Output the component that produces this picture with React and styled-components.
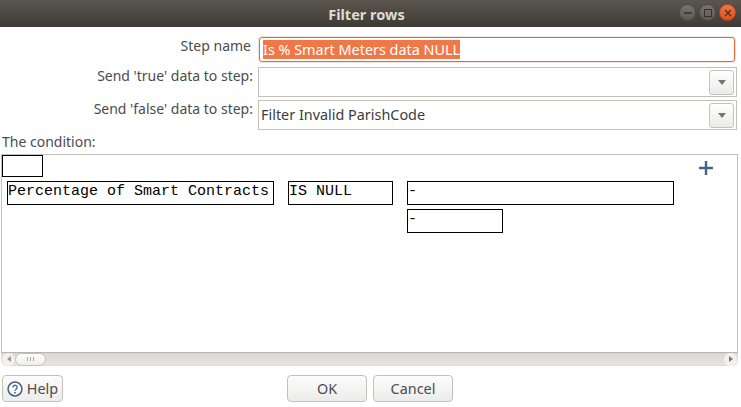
import React from 'react';
import styled, { createGlobalStyle } from 'styled-components';

const Global = createGlobalStyle`
  html, body {
    margin: 0;
    padding: 0;
    background: #fff;
  }
  * {
    box-sizing: border-box;
  }
`;

const Window = styled.div`
  width: 741px;
  height: 407px;
  overflow: hidden;
  background: #fff;
  font-family: "Noto Sans", sans-serif;
  font-size: 14px;
  color: #3c3c3c;
`;

const TitleBar = styled.div`
  position: relative;
  height: 27px;
  padding-right: 8px;
  background: linear-gradient(#5a564d, #3d3b36);
  display: flex;
  align-items: center;
  justify-content: center;
  color: #dfdbd2;
  font-weight: 700;
  font-size: 14.5px;
`;

const WindowButtons = styled.div`
  position: absolute;
  right: 5px;
  top: 4px;
  display: flex;
  gap: 3px;
`;

const WindowButton = styled.div`
  width: 17px;
  height: 17px;
  border-radius: 50%;
  display: flex;
  align-items: center;
  justify-content: center;
  background: ${p => (p.$close ? 'linear-gradient(#f0774a, #d9501e)' : 'linear-gradient(#77746c, #5d5a53)')};
  border: 1px solid ${p => (p.$close ? '#b5461f' : '#4c4a44')};
`;

const Form = styled.div`
  display: grid;
  grid-template-columns: 258px 479px;
  padding-top: 10px;
`;

const Label = styled.div`
  text-align: right;
  padding-right: ${p => p.$pad || 5}px;
  line-height: 17px;
  color: #4c4c4c;
`;

const NameInput = styled.div`
  height: 25px;
  margin: 0 2px 5px 1px;
  border: 1px solid #e9663a;
  border-radius: 3px;
  box-shadow: 0 0 0 1px #f3e4dc;
  padding: 2px 3px;
  line-height: 19px;
  font-size: 14.4px;
`;

const Selected = styled.span`
  display: inline-block;
  height: 19px;
  background: #f07746;
  color: #fff;
`;

const Combo = styled.div`
  height: 30px;
  margin-bottom: ${p => p.$gap || 0}px;
  border: 1px solid #c4c1ba;
  display: flex;
  align-items: center;
  justify-content: space-between;
  padding: 0 2px 0 2px;
  font-size: 14.4px;
  line-height: 17px;
  color: #3c3c3c;
`;

const ComboText = styled.span`
  margin-bottom: 2px;
`;

const ComboArrow = styled.div`
  width: 25px;
  height: 25px;
  border: 1px solid #c6c3bc;
  border-radius: 3px;
  background: linear-gradient(#fff, #ebebea);
  display: flex;
  align-items: center;
  justify-content: center;
  &::after {
    content: '';
    border-left: 4px solid transparent;
    border-right: 4px solid transparent;
    border-top: 5px solid #77756f;
  }
`;

const Heading = styled.div`
  padding: 2px 0 0 2px;
  height: 24px;
  line-height: 19px;
  color: #4c4c4c;
`;

const Canvas = styled.div`
  position: relative;
  width: 737px;
  height: 199px;
  margin-left: 1px;
  border: 1px solid #c4c1ba;
  border-bottom-color: #b8b5ad;
  background: #fff;
`;

const Node = styled.div`
  position: absolute;
  left: ${p => p.$x}px;
  top: ${p => p.$y}px;
  width: ${p => p.$w}px;
  height: ${p => p.$h}px;
  border: 1px solid #000;
  background: #fff;
  color: #000;
  font-family: "Liberation Mono", monospace;
  font-size: 15px;
  line-height: 19px;
  white-space: pre;
`;

const AddButton = styled.svg`
  position: absolute;
  left: 696px;
  top: 5px;
`;

const Scrollbar = styled.div`
  width: 737px;
  height: 13px;
  margin-left: 1px;
  display: flex;
  align-items: center;
  background: linear-gradient(#d8d7d4, #e6e5e3);
  border: 1px solid #dcdbd8;
  border-top: none;
  border-radius: 0 0 6px 6px;
`;

const ScrollEnd = styled.div`
  width: 13px;
  height: 13px;
  flex: none;
  background: #f2f1ef;
  border-radius: 6px;
  display: flex;
  align-items: center;
  justify-content: center;
  &::after {
    content: '';
    border-top: 3px solid transparent;
    border-bottom: 3px solid transparent;
    ${p => (p.$right ? 'border-left: 4px solid #77756f;' : 'border-right: 4px solid #9a9892;')}
  }
`;

const Thumb = styled.div`
  width: 31px;
  height: 13px;
  flex: none;
  border: 1px solid #c4c2bd;
  border-radius: 7px;
  background: linear-gradient(#fff, #eeedeb);
  display: flex;
  align-items: center;
  justify-content: center;
  gap: 2px;
`;

const Grip = styled.span`
  width: 1px;
  height: 4px;
  background: #aaa8a2;
`;

const Track = styled.div`
  flex: 1;
`;

const Footer = styled.div`
  display: grid;
  grid-template-columns: 279px auto auto 1fr;
  column-gap: 6px;
  padding: 9px 0 0 2px;
`;

const Button = styled.div`
  height: 27px;
  width: ${p => p.$w}px;
  border: 1px solid #c4c1ba;
  border-radius: 4px;
  background: linear-gradient(#fcfcfc, #ececeb);
  display: flex;
  align-items: center;
  justify-content: center;
  gap: 4px;
  font-size: 14.4px;
  color: #4c4c4c;
`;

const App = () => (
  <Window>
    <Global />
    <TitleBar>
      Filter rows
      <WindowButtons>
        <WindowButton>
          <svg width="10" height="10"><path d="M1 5h8" stroke="#35332f" strokeWidth="1.5" /></svg>
        </WindowButton>
        <WindowButton>
          <svg width="10" height="10"><rect x="1.5" y="1.5" width="7" height="7" fill="none" stroke="#35332f" /></svg>
        </WindowButton>
        <WindowButton $close>
          <svg width="10" height="10"><path d="M2 2l6 6M8 2l-6 6" stroke="#5a2a12" strokeWidth="1.3" /></svg>
        </WindowButton>
      </WindowButtons>
    </TitleBar>
    <Form>
      <Label $pad={7}>Step name</Label>
      <NameInput><Selected>Is % Smart Meters data NULL</Selected></NameInput>
      <Label>Send 'true' data to step:</Label>
      <Combo $gap={3}><span /><ComboArrow /></Combo>
      <Label>Send 'false' data to step:</Label>
      <Combo><ComboText>Filter Invalid ParishCode</ComboText><ComboArrow /></Combo>
    </Form>
    <Heading>The condition:</Heading>
    <Canvas>
      <Node $x={0} $y={0} $w={41} $h={22} />
      <Node $x={5} $y={26} $w={267} $h={24}>Percentage of Smart Contracts</Node>
      <Node $x={286} $y={26} $w={105} $h={24}>IS NULL</Node>
      <Node $x={405} $y={26} $w={267} $h={24}>-</Node>
      <Node $x={405} $y={54} $w={96} $h={24}>-</Node>
      <AddButton width="16" height="16" viewBox="0 0 16 16">
        <path d="M8 1v14M1 8h14" stroke="#3f6587" strokeWidth="2.4" />
      </AddButton>
    </Canvas>
    <Scrollbar>
      <ScrollEnd />
      <Thumb><Grip /><Grip /><Grip /></Thumb>
      <Track />
      <ScrollEnd $right />
    </Scrollbar>
    <Footer>
      <div>
        <Button $w={61}>
          <svg width="16" height="16" viewBox="0 0 18 18">
            <circle cx="9" cy="9" r="7.8" fill="#fff" stroke="#3f6587" strokeWidth="1.7" />
            <path d="M6.6 7.2a2.4 2.4 0 1 1 3.6 2.1c-.8.5-1.2.9-1.2 1.8" fill="none" stroke="#3f6587" strokeWidth="1.5" />
            <circle cx="9" cy="13.2" r="1" fill="#3f6587" />
          </svg>
          Help
        </Button>
      </div>
      <Button $w={80}>OK</Button>
      <Button $w={80}>Cancel</Button>
    </Footer>
  </Window>
);

export default App;
